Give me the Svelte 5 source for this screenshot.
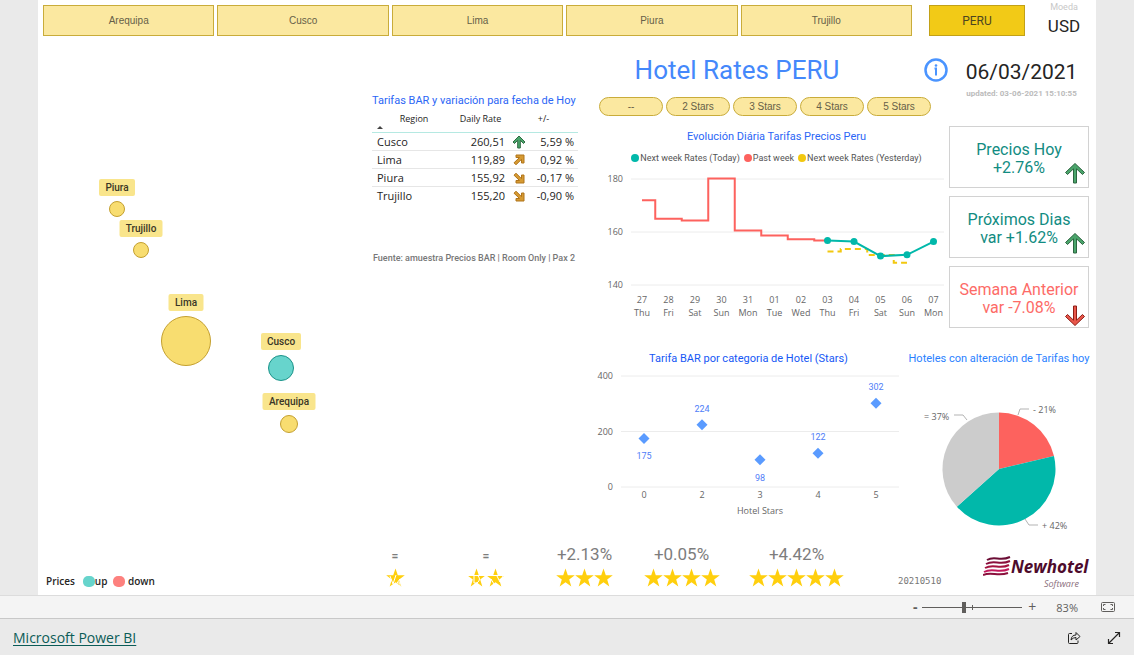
<script>
	const regions = ['Arequipa', 'Cusco', 'Lima', 'Piura', 'Trujillo'];
	const categories = ['--', '2 Stars', '3 Stars', '4 Stars', '5 Stars'];

	const pins = [
		{ name: 'Piura', x: 74, y: 173, r: 8, w: 36 },
		{ name: 'Trujillo', x: 98, y: 214, r: 8, w: 43 },
		{ name: 'Lima', x: 143, y: 305, r: 25, w: 35 },
		{ name: 'Cusco', x: 238, y: 332, r: 13, w: 40, up: true },
		{ name: 'Arequipa', x: 246, y: 388, r: 9, w: 53 }
	];

	const rates = [
		{ region: 'Cusco', rate: '260,51', trend: 'up', change: '5,59 %' },
		{ region: 'Lima', rate: '119,89', trend: 'rise', change: '0,92 %' },
		{ region: 'Piura', rate: '155,92', trend: 'fall', change: '-0,17 %' },
		{ region: 'Trujillo', rate: '155,20', trend: 'fall', change: '-0,90 %' }
	];

	const days = [
		['27', 'Thu'], ['28', 'Fri'], ['29', 'Sat'], ['30', 'Sun'],
		['31', 'Mon'], ['01', 'Tue'], ['02', 'Wed'], ['03', 'Thu'],
		['04', 'Fri'], ['05', 'Sat'], ['06', 'Sun'], ['07', 'Mon']
	];
	const past = [172, 165, 164.3, 180.2, 160.6, 158.7, 157.3, 156.8];
	const today = [156.8, 156.4, 150.9, 151.4, 156.4];
	const yesterday = [152.6, 153.6, 151.3, 148.4];

	const day_x = i => 44 + i * 26.5;
	const rate_y = v => 11 + (180 - v) * 2.65;

	// step line that changes level half way between two days
	const step_path = (values, start) => {
		let d = `M${day_x(start)} ${rate_y(values[0])}`;
		for (let i = 1; i < values.length; i++) {
			d += `H${day_x(start + i - 0.5)}V${rate_y(values[i])}`;
		}
		return d + `H${day_x(start + values.length - 1)}`;
	};

	const today_points = today.map((v, i) => `${day_x(i + 7)},${rate_y(v)}`).join(' ');

	const star_rates = [
		{ stars: '0', value: 175, below: true },
		{ stars: '2', value: 224 },
		{ stars: '3', value: 98, below: true },
		{ stars: '4', value: 122 },
		{ stars: '5', value: 302 }
	];
	const star_x = i => 46 + i * 58;
	const star_y = v => 120 - v * 0.2775;

	const cards = [
		{ title: 'Precios Hoy', value: '+2.76%' },
		{ title: 'Próximos Dias', value: 'var +1.62%' },
		{ title: 'Semana Anterior', value: 'var -7.08%', down: true }
	];

	const slices = [
		{ share: 21.3, color: '#fd625e' },
		{ share: 42.1, color: '#01b8aa' },
		{ share: 36.6, color: '#cccccc' }
	];
	const pie = slices.map((slice, i) => {
		const before = slices.slice(0, i).reduce((sum, s) => sum + s.share, 0);
		const a = (before / 100) * Math.PI * 2;
		const b = ((before + slice.share) / 100) * Math.PI * 2;
		const p = t => `${94 + 56.5 * Math.sin(t)} ${102 - 56.5 * Math.cos(t)}`;
		return { color: slice.color, d: `M94 102L${p(a)}A56.5 56.5 0 0 1 ${p(b)}Z` };
	});

	const ratings = [
		{ value: '=', count: 1 },
		{ value: '=', count: 2 },
		{ value: '+2.13%', count: 3 },
		{ value: '+0.05%', count: 4 },
		{ value: '+4.42%', count: 5 }
	];

	let zoom = 41;
</script>

{#snippet trend_icon(kind)}
	<svg class="trend" viewBox="0 0 14 14" width="14" height="14" aria-label={kind} role="img">
		{#if kind === 'up'}
			<path d="M7 1L13 7L11.500 8.500L8.300 5.300V13H5.700V5.300L2.500 8.500L1 7Z" fill="#4ba56b" stroke="#2f6b43" />
		{:else if kind === 'rise'}
			<path d="M4 2H12V10H9.500V6.300L4 11.800L2 9.800L7.500 4.500H4Z" fill="#d69a32" stroke="#b0741a" />
		{:else}
			<path d="M4 12H12V4H9.500V7.700L4 2.200L2 4.200L7.500 9.500H4Z" fill="#d69a32" stroke="#b0741a" />
		{/if}
	</svg>
{/snippet}

<div class="app">
	<main class="report">
		<header>
			<nav aria-label="Region">
				{#each regions as region}
					<button>{region}</button>
				{/each}
			</nav>
			<button class="country">PERU</button>
			<div class="currency">
				<small>Moeda</small>
				<span>USD</span>
			</div>
		</header>

		<div class="body">
			<svg class="map" viewBox="0 0 329 490" role="img" aria-label="Prices by region">
				{#each pins as pin}
					<circle cx={pin.x} cy={pin.y} r={pin.r - 0.5} class:up={pin.up} />
					<rect x={pin.x - pin.w / 2} y={pin.y - pin.r - 22} width={pin.w} height="17" rx="2" />
					<text x={pin.x} y={pin.y - pin.r - 10}>{pin.name}</text>
				{/each}
			</svg>

			<section class="rates">
				<h2>Tarifas BAR y variación para fecha de Hoy</h2>
				<table>
					<thead>
						<tr>
							<th>Region<i class="sort"></i></th>
							<th>Daily Rate</th>
							<th></th>
							<th>+/-</th>
						</tr>
					</thead>
					<tbody>
						{#each rates as row}
							<tr>
								<td>{row.region}</td>
								<td>{row.rate}</td>
								<td>{@render trend_icon(row.trend)}</td>
								<td>{row.change}</td>
							</tr>
						{/each}
					</tbody>
				</table>
				<p>Fuente: amuestra Precios BAR | Room Only | Pax 2</p>
			</section>

			<div class="panel">
				<div class="upper">
					<div class="trends">
						<div class="title">
							<h1>Hotel Rates PERU</h1>
							<button aria-label="Information">
								<svg viewBox="0 0 24 24" width="24" height="24" fill="none" stroke="#4a94ff" stroke-width="2.500">
									<circle cx="12" cy="12" r="10.500" />
									<path d="M10.500 10.500H12V17.500" stroke-width="2" />
									<circle cx="12" cy="7.500" r="1.300" fill="#4a94ff" stroke="none" />
								</svg>
							</button>
						</div>

						<div class="filters">
							{#each categories as category}
								<button>{category}</button>
							{/each}
						</div>

						<h2>Evolución Diária Tarifas Precios Peru</h2>
						<ul class="legend">
							<li><i class="teal"></i>Next week Rates (Today)</li>
							<li><i class="red"></i>Past week</li>
							<li><i class="gold"></i>Next week Rates (Yesterday)</li>
						</ul>
						<svg class="chart" viewBox="0 0 346 154" role="img" aria-label="Evolución Diária">
							{#each [180, 160, 140] as v}
								<path class="grid" d="M33 {rate_y(v)}H346" />
								<text class="scale" x="25" y={rate_y(v) + 3}>{v}</text>
							{/each}
							<path d={step_path(past, 0)} fill="none" stroke="#fd625e" stroke-width="2" />
							<path d={step_path(yesterday, 7)} fill="none" stroke="#f2c80f" stroke-width="2" stroke-dasharray="6 4" />
							<polyline points={today_points} fill="none" stroke="#01b8aa" stroke-width="2" />
							{#each today as v, i}
								<circle cx={day_x(i + 7)} cy={rate_y(v)} r="3.500" fill="#01b8aa" />
							{/each}
							{#each days as [date, day], i}
								<text x={day_x(i)} y="135">{date}</text>
								<text x={day_x(i)} y="148">{day}</text>
							{/each}
						</svg>
					</div>

					<aside>
						<div class="date">
							<time datetime="2021-06-03">06/03/2021</time>
							<small>updated: 03-06-2021 15:10:55</small>
						</div>
						{#each cards as card}
							<div class="card" class:down={card.down}>
								<span>{card.title}</span>
								<span>{card.value}</span>
								<svg viewBox="0 0 22 22" width="22" height="22" aria-hidden="true">
									<path d="M11 1.500L20.500 10.500L18.500 12.500L12.500 6.800V21H9.500V6.800L3.500 12.500L1.500 10.500Z" />
								</svg>
							</div>
						{/each}
					</aside>
				</div>

				<div class="lower">
					<section>
						<h2 class="deep">Tarifa BAR por categoria de Hotel (Stars)</h2>
						<svg class="chart" viewBox="0 0 301 152" role="img" aria-label="Tarifa BAR por categoria">
							{#each [400, 200, 0] as v}
								<path class="grid" d="M23 {star_y(v)}H301" />
								<text class="scale" x="15" y={star_y(v) + 3}>{v}</text>
							{/each}
							{#each star_rates as item, i}
								<path d="M{star_x(i)} {star_y(item.value) - 5.5}l5.500 5.500l-5.500 5.500l-5.500 -5.500z" fill="#5a9bff" />
								<text class="value" x={star_x(i)} y={star_y(item.value) + (item.below ? 21 : -13)}>{item.value}</text>
								<text x={star_x(i)} y="131">{item.stars}</text>
							{/each}
							<text x="162" y="147">Hotel Stars</text>
						</svg>
					</section>
					<section>
						<h2 class="light">Hoteles con alteración de Tarifas hoy</h2>
						<svg class="chart pie" viewBox="0 0 188 162" role="img" aria-label="Hoteles con alteración">
							{#each pie as slice}
								<path d={slice.d} fill={slice.color} />
							{/each}
							<path d="M113 48L115 42H124M62 53L58 48H49M120 152L124 158H133" fill="none" stroke="#b3b3b3" />
							<text x="128" y="46">- 21%</text>
							<text x="19" y="53">= 37%</text>
							<text x="137" y="162">+ 42%</text>
						</svg>
					</section>
				</div>
			</div>
		</div>

		<div class="bottom">
			<div class="prices">
				<b>Prices</b>
				<b><i class="up"></i>up</b>
				<b><i class="down"></i> down</b>
			</div>
			<div class="ratings">
				{#each ratings as rating}
					<div class="rating">
						<span class:same={rating.value === '='}>{rating.value}</span>
						<svg viewBox="0 0 {rating.count * 19} 20" width={rating.count * 19} height="20" role="img" aria-label="{rating.count} stars">
							{#each Array(rating.count) as _, i}
								<path
									transform="translate({i * 19} 0)"
									d="M9.500 0.500L11.800 7.200H18.800L13.200 11.400L15.300 18.500L9.500 14.300L3.700 18.500L5.800 11.400L0.200 7.200H7.200Z"
									fill="#ffcf0d"
								/>
							{/each}
							{#if rating.count === 1}
								<path d="M4 8L7 16L10 7M14 11L11 15H16M14 12V18M1 12H5" fill="none" stroke="#fff" />
							{:else if rating.count === 2}
								<path d="M0 7.500H38M7 7V15H10Q15 11 10 7M18 12L22 15L24 11L27 16M30 8L33 14L36 8" fill="none" stroke="#fff" />
							{/if}
						</svg>
					</div>
				{/each}
			</div>
			<span class="version">20210510</span>
			<svg class="logo" viewBox="0 0 108 36" width="108" height="36" role="img" aria-label="Newhotel Software">
				<g fill="none" stroke="#a3123f" stroke-width="2">
					<path d="M4 6C12 1 16 8 27 3" stroke="#6b0d35" />
					<path d="M3 10C12 5 16 12 27 7" stroke="#8a0f3c" />
					<path d="M2 14C11 9 16 16 26 11" />
					<path d="M1 18C10 13 15 20 26 15" stroke="#c2185b" />
					<path d="M0 21C9 17 14 23 25 19" stroke="#8a0f3c" />
				</g>
				<text class="name" x="28" y="19">Newhotel</text>
				<text class="product" x="61" y="33">Software</text>
			</svg>
		</div>
	</main>

	<div class="zoombar">
		<button class="minus" aria-label="Zoom out">-</button>
		<input type="range" min="0" max="100" bind:value={zoom} aria-label="Zoom" />
		<button aria-label="Zoom in">+</button>
		<output>83%</output>
		<button class="fit" aria-label="Fit to page">
			<svg viewBox="0 0 14 10" width="14" height="10" fill="none" stroke="#605e5c">
				<rect x="0.500" y="0.500" width="13" height="9" rx="1" />
				<path d="M2.500 4V2.500H4.500M9.500 2.500H11.500V4M11.500 6V7.500H9.500M4.500 7.500H2.500V6" />
			</svg>
		</button>
	</div>

	<footer>
		<a href="https://powerbi.microsoft.com">Microsoft Power BI</a>
		<button aria-label="Share">
			<svg viewBox="0 0 14 14" width="14" height="14" fill="none" stroke="#252423">
				<path d="M5 2.500H2.500Q1.500 2.500 1.500 3.500V11.500Q1.500 12.500 2.500 12.500H10Q11 12.500 11 11.500V9.500" />
				<path d="M4 9Q4.500 4 9 4V1.500L13 5.500L9 9V6.500Q6 6.500 4 9Z" />
			</svg>
		</button>
		<button aria-label="Full screen">
			<svg viewBox="0 0 14 14" width="14" height="14" fill="none" stroke="#252423" stroke-width="1.200">
				<path d="M1.500 12.500L12.500 1.500M8 1.500H12.500V6M1.500 8V12.500H6" />
			</svg>
		</button>
	</footer>
</div>

<style>
	:global(body) {
		background: #eaeaea;
		font-family: "Open Sans", "Noto Sans", sans-serif;
		color: #252423;
	}

	.app {
		display: flex;
		flex-direction: column;
		min-height: 100vh;
	}

	button {
		border: none;
		background: none;
		padding: 0;
		font-family: inherit;
		color: inherit;
		cursor: pointer;
	}

	h1, h2, p, ul {
		margin: 0;
		padding: 0;
		font-weight: normal;
	}

	h2 {
		font: 11px/16px Roboto, sans-serif;
		color: #2b66f6;
		text-align: center;
		white-space: nowrap;
	}

	h2.deep {
		color: #1557f5;
	}

	h2.light {
		color: #2a7fff;
	}

	.report {
		flex: 1;
		display: flex;
		flex-direction: column;
		margin: 0 38px;
		padding: 0 5px;
		background: #fff;
	}

	header {
		display: flex;
		align-items: flex-end;
		gap: 12px;
		height: 36px;
	}

	nav {
		flex: 1;
		display: grid;
		grid-template-columns: repeat(5, 1fr);
		gap: 3px;
		margin-right: 5px;
	}

	nav button,
	.filters button {
		border: 1px solid #c9ac3a;
		background: #fbe8a0;
		font-family: "Liberation Sans", sans-serif;
		font-size: 10px;
		color: #665f48;
	}

	nav button {
		height: 31px;
	}

	.country {
		width: 96px;
		height: 31px;
		border: 1px solid #c2a117;
		background: #f2ca17;
		font-family: Roboto, sans-serif;
		font-size: 12px;
		color: #4d4520;
	}

	.currency {
		display: flex;
		flex-direction: column;
		align-items: center;
		align-self: flex-start;
		width: 54px;
		font-family: Roboto, sans-serif;
	}

	.currency small {
		font-size: 9px;
		line-height: 14px;
		color: #c8c8c8;
	}

	.currency span {
		font-size: 17px;
		line-height: 24px;
	}

	.body {
		display: grid;
		grid-template-columns: minmax(0, 329fr) minmax(0, 206fr) minmax(0, 513fr);
	}

	.map {
		width: 100%;
	}

	.map circle {
		fill: #f8dd70;
		stroke: #c4a030;
	}

	.map circle.up {
		fill: #67d4cc;
		stroke: #1a9389;
	}

	.map rect {
		fill: #f9e58c;
	}

	.map text {
		font: 500 10px Roboto, sans-serif;
		fill: #3a3626;
		text-anchor: middle;
	}

	.rates {
		padding-top: 57px;
	}

	.rates h2 {
		text-align: left;
	}

	table {
		width: 100%;
		border-collapse: collapse;
		table-layout: fixed;
		font-size: 11px;
	}

	th {
		position: relative;
		height: 23px;
		padding: 0 0 2px;
		border-bottom: 1px solid #b5e9e2;
		font-size: 9px;
		font-weight: normal;
		line-height: 20px;
		vertical-align: top;
		box-sizing: border-box;
	}

	th:nth-child(1) {
		width: 84px;
	}

	th:nth-child(2) {
		width: 49px;
		white-space: nowrap;
	}

	th:nth-child(3) {
		width: 28px;
	}

	th:nth-child(4) {
		padding-right: 24px;
	}

	.sort {
		position: absolute;
		left: 5px;
		bottom: 3px;
		border: 3px solid transparent;
		border-top: 0;
		border-bottom-color: #444;
	}

	td {
		height: 16px;
		padding: 1px 0 0;
		border-bottom: 1px solid #e6e6e6;
		line-height: 16px;
		text-align: right;
		white-space: nowrap;
	}

	tr:last-child td {
		border-bottom: none;
	}

	td:first-child {
		padding-left: 5px;
		text-align: left;
	}

	td:nth-child(3) {
		text-align: center;
	}

	td:last-child {
		padding-right: 4px;
	}

	.trend {
		display: block;
		margin: 0 auto;
	}

	.rates p {
		margin-top: 46px;
		padding-left: 1px;
		font: 500 9px/16px Roboto, sans-serif;
		color: #777;
		white-space: nowrap;
	}

	.panel {
		padding-left: 20px;
	}

	.upper {
		display: grid;
		grid-template-columns: minmax(0, 1fr) 140px;
		gap: 5px;
		padding-right: 2px;
	}

	.title {
		display: flex;
		align-items: center;
		height: 32px;
		margin: 18px -4px 11px 0;
	}

	h1 {
		flex: 1;
		padding: 0 48px 0 0;
		text-align: center;
		font: 26px/32px Roboto, sans-serif;
		color: #4488fb;
	}

	.title svg {
		display: block;
	}

	.filters {
		display: grid;
		grid-template-columns: repeat(5, 1fr);
		gap: 3px;
		padding: 0 13px 0 1px;
	}

	.filters button {
		height: 19px;
		border-radius: 10px;
	}

	.trends h2 {
		margin-top: 13px;
		padding-left: 11px;
	}

	.legend {
		display: flex;
		justify-content: center;
		gap: 4px;
		margin: 5px 0 2px;
		padding-left: 11px;
		font: 9px/16px Roboto, sans-serif;
		color: #555;
		list-style: none;
		white-space: nowrap;
	}

	.legend li {
		display: flex;
		align-items: center;
		gap: 1px;
	}

	.legend i {
		width: 8px;
		height: 8px;
		border-radius: 50%;
	}

	.teal {
		background: #01b8aa;
	}

	.red {
		background: #fd625e;
	}

	.gold {
		background: #f2c80f;
	}

	.chart {
		display: block;
		width: 100%;
		overflow: visible;
	}

	.chart text {
		font-size: 9px;
		fill: #666;
		text-anchor: middle;
	}

	.chart .scale {
		text-anchor: end;
	}

	.chart .value {
		font-family: Roboto, sans-serif;
		fill: #4f7df8;
	}

	.chart.pie text {
		text-anchor: start;
	}

	.grid {
		stroke: #ececec;
	}

	aside {
		display: flex;
		flex-direction: column;
		gap: 8px;
		font-family: Roboto, sans-serif;
	}

	.date {
		display: flex;
		flex-direction: column;
		align-items: center;
		height: 82px;
		padding-left: 5px;
		white-space: nowrap;
	}

	time {
		margin-top: 20px;
		font-size: 21px;
		line-height: 32px;
	}

	.date small {
		font-size: 8px;
		font-weight: bold;
		line-height: 12px;
		color: #bbb;
	}

	.card {
		position: relative;
		display: flex;
		flex-direction: column;
		align-items: center;
		justify-content: center;
		height: 56px;
		padding-top: 4px;
		border: 1px solid #d2d2d2;
		font-size: 16px;
		line-height: 18px;
		color: #128c82;
		white-space: nowrap;
	}

	.card.down {
		color: #fd6b67;
	}

	.card svg {
		position: absolute;
		right: 2px;
		bottom: 3px;
		fill: #4ba56b;
		stroke: #2c6440;
	}

	.card.down svg {
		bottom: 0;
		fill: #e8564a;
		stroke: #8e1d15;
		transform: rotate(180deg);
	}

	.lower {
		display: grid;
		grid-template-columns: minmax(0, 301fr) minmax(0, 188fr);
		gap: 6px;
		margin-top: 23px;
		margin-right: -2px;
	}

	.bottom {
		display: flex;
		align-items: flex-end;
		flex: 1;
		padding: 0 0 5px 3px;
	}

	.prices {
		display: flex;
		gap: 6px;
		width: 304px;
		font-size: 10px;
		line-height: 18px;
	}

	.prices b {
		font-weight: 600;
	}

	.prices i {
		display: inline-block;
		width: 12px;
		height: 11px;
		margin-left: 2px;
		border-radius: 5px;
		vertical-align: -2px;
	}

	.prices i.up {
		background: #67d4cc;
	}

	.prices i.down {
		margin-left: 0;
		background: #fd817e;
	}

	.ratings {
		display: grid;
		grid-template-columns: 90px 92px 105px 89px 141px;
		align-items: end;
		padding-bottom: 2px;
	}

	.rating {
		display: flex;
		flex-direction: column;
		align-items: center;
		font: 17px/28px Roboto, sans-serif;
		color: #7d7d7d;
	}

	.rating .same {
		font-size: 12px;
		font-weight: bold;
		line-height: 24px;
	}

	.version {
		margin: 0 auto 0 31px;
		font: 9px/18px "DejaVu Sans Mono", monospace;
		color: #777;
	}

	.logo .name {
		font: italic bold 17px "Open Sans", sans-serif;
		fill: #4e0b2c;
	}

	.logo .product {
		font: italic 9px "Open Sans", sans-serif;
		fill: #8b6f7c;
	}

	.zoombar {
		display: flex;
		align-items: center;
		justify-content: flex-end;
		height: 22px;
		padding-right: 19px;
		border-top: 1px solid #dcdcdc;
		border-bottom: 1px solid #c8c8c8;
		background: #f4f4f4;
		font-size: 12px;
		color: #605e5c;
	}

	.zoombar button {
		width: 14px;
		font-size: 14px;
		line-height: 20px;
	}

	.zoombar .minus {
		font-weight: bold;
	}

	.zoombar input {
		appearance: none;
		width: 100px;
		height: 11px;
		margin: 0 3px 0 0;
		background:
			linear-gradient(#605e5c, #605e5c) 50px 3px / 1px 5px no-repeat,
			linear-gradient(#605e5c, #605e5c) 0 5px / 100% 1px no-repeat;
	}

	.zoombar input::-webkit-slider-thumb {
		appearance: none;
		width: 4px;
		height: 11px;
		background: #605e5c;
	}

	output {
		margin: 0 23px 0 17px;
		font-size: 11px;
	}

	footer {
		display: flex;
		align-items: center;
		gap: 26px;
		height: 36px;
		padding: 2px 13px 0;
		line-height: 20px;
		box-sizing: border-box;
	}

	footer a {
		margin-right: auto;
		font-size: 14px;
		color: #0b5c57;
		text-underline-offset: 2px;
	}

	footer svg,
	.fit svg {
		display: block;
	}
</style>
